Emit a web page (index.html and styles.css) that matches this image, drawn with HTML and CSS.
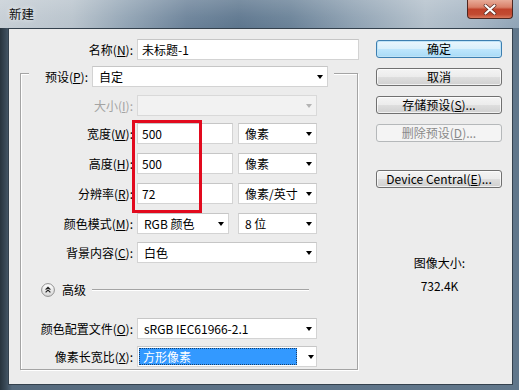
FILE: index.html
```html
<!DOCTYPE html>
<html lang="zh-CN">
<head>
<meta charset="utf-8">
<title>新建</title>
<link rel="stylesheet" href="styles.css">
</head>
<body>
<div class="window">
  <div class="titlebar">
    <span class="title">新建</span>
    <div class="close">
      <svg width="14" height="11" viewBox="0 0 14 11"><path d="M2.5 1.5 L11.5 9.5 M11.5 1.5 L2.5 9.5" stroke="#5a2a22" stroke-width="3.6" stroke-linecap="round"/><path d="M2.5 1.5 L11.5 9.5 M11.5 1.5 L2.5 9.5" stroke="#fff" stroke-width="2.2" stroke-linecap="round"/></svg>
    </div>
  </div>
  <div class="client">
    <div class="left">
      <div class="row name-row">
        <span class="lbl">名称(<u>N</u>):</span>
        <div class="field input w-name">未标题-1</div>
      </div>
      <div class="group">
        <div class="row preset-row">
          <span class="lbl">预设(<u>P</u>):</span>
          <div class="field select w-preset"><span class="val">自定</span><span class="arrow"></span></div>
        </div>
        <div class="row r-size">
          <span class="lbl disabled">大小(<u>I</u>):</span>
          <div class="field select w-full dis"><span class="val"></span><span class="arrow"></span></div>
        </div>
        <div class="row r-width">
          <span class="lbl">宽度(<u>W</u>):</span>
          <div class="field input w-num">500</div>
          <div class="field select w-unit"><span class="val">像素</span><span class="arrow"></span></div>
        </div>
        <div class="row">
          <span class="lbl">高度(<u>H</u>):</span>
          <div class="field input w-num">500</div>
          <div class="field select w-unit"><span class="val">像素</span><span class="arrow"></span></div>
        </div>
        <div class="row">
          <span class="lbl">分辨率(<u>R</u>):</span>
          <div class="field input w-num">72</div>
          <div class="field select w-unit"><span class="val">像素/英寸</span><span class="arrow"></span></div>
        </div>
        <div class="row">
          <span class="lbl">颜色模式(<u>M</u>):</span>
          <div class="field select w-mode"><span class="val">RGB 颜色</span><span class="arrow"></span></div>
          <div class="field select w-bits"><span class="val">8 位</span><span class="arrow"></span></div>
        </div>
        <div class="row r-bg">
          <span class="lbl">背景内容(<u>C</u>):</span>
          <div class="field select w-full"><span class="val">白色</span><span class="arrow"></span></div>
        </div>
        <div class="adv">
          <svg class="adv-icon" width="14" height="14" viewBox="0 0 14 14">
            <defs><linearGradient id="g" x1="0" y1="0" x2="0" y2="1"><stop offset="0" stop-color="#ffffff"/><stop offset="1" stop-color="#d6d6d6"/></linearGradient></defs>
            <circle cx="7" cy="7" r="6.4" fill="url(#g)" stroke="#8e8e8e" stroke-width="1"/>
            <path d="M4.6 6.6 L7 4.3 L9.4 6.6 M4.6 9.4 L7 7.1 L9.4 9.4" fill="none" stroke="#222" stroke-width="1.2"/>
          </svg>
          <span class="adv-text">高级</span>
          <span class="adv-line"></span>
        </div>
        <div class="row r-profile">
          <span class="lbl">颜色配置文件(<u>O</u>):</span>
          <div class="field select w-full"><span class="val">sRGB IEC61966-2.1</span><span class="arrow"></span></div>
        </div>
        <div class="row r-aspect">
          <span class="lbl">像素长宽比(<u>X</u>):</span>
          <div class="field select w-full hl-select"><span class="val hl">方形像素</span><span class="arrow"></span></div>
        </div>
        <div class="redbox"></div>
      </div>
    </div>
    <div class="right">
      <div class="btn default">确定</div>
      <div class="btn">取消</div>
      <div class="btn">存储预设(<u>S</u>)...</div>
      <div class="btn disabled-btn">删除预设(<u>D</u>)...</div>
      <div class="btn btn-dc">Device Central(<u>E</u>)...</div>
      <div class="info">
        <div>图像大小:</div>
        <div>732.4K</div>
      </div>
    </div>
  </div>
</div>
</body>
</html>
```
FILE: styles.css
```css
html, body {
  margin: 0;
  padding: 0;
}
body {
  width: 519px;
  height: 390px;
  overflow: hidden;
  font-family: "Noto Sans CJK SC", "Noto Sans", sans-serif;
  font-size: 12px;
  color: #000;
}
u { text-decoration: underline; text-underline-offset: 1px; }

.window {
  width: 519px;
  height: 390px;
  display: flex;
  flex-direction: column;
  background: linear-gradient(90deg, #27333d 0px, #3b4b59 6px, #55697c 12px, #5d7388 50%, #61778b 100%);
}

.titlebar {
  flex: none;
  height: 28px;
  display: flex;
  justify-content: space-between;
  align-items: flex-start;
  background:
    linear-gradient(180deg, rgba(255,255,255,0.18) 0%, rgba(255,255,255,0.05) 60%, rgba(0,0,0,0) 100%),
    linear-gradient(90deg, #c6ced5 0%, #b8c3cc 14%, #93a5b5 24%, #6b8299 36%, #5d768e 46%, #6a8298 56%, #8ea1b2 68%, #b3c0cb 82%, #a4b4c3 92%, #8fa3b6 100%);
}
.title {
  margin: 6px 0 0 9px;
  line-height: 16px;
  font-size: 12.5px;
  color: #111;
  text-shadow: 0 0 5px rgba(255,255,255,0.9);
}
.close {
  box-sizing: border-box;
  width: 46px;
  height: 19px;
  margin-right: 6px;
  border: 1px solid #4d2620;
  border-top: none;
  border-radius: 0 0 4px 4px;
  background: linear-gradient(180deg, #e8ab98 0%, #d98069 40%, #c0432b 52%, #c24a31 80%, #d9785c 100%);
  display: flex;
  align-items: center;
  justify-content: center;
}

.client {
  flex: 1;
  margin: 0 6px 5px 8px;
  box-sizing: border-box;
  border: 1px solid #34414d;
  background: #ececec;
  display: flex;
}

.left {
  flex: none;
  width: 350px;
}

.row {
  display: flex;
  align-items: center;
  height: 21px;
  margin-top: 9px;
}
.lbl {
  flex: none;
  box-sizing: border-box;
  text-align: right;
  padding-right: 4px;
  line-height: 21px;
  white-space: nowrap;
}
.lbl.disabled { color: #a3a3a3; }

.name-row { margin-top: 10px; }
.name-row .lbl { width: 128px; }
.group .lbl { width: 116px; }

.field {
  box-sizing: border-box;
  height: 21px;
  border: 1px solid #d3d3d3;
  border-top-color: #c6c6c6;
  background: #fff;
  display: flex;
  align-items: center;
  line-height: 19px;
  white-space: nowrap;
  flex: none;
}
.input { padding-left: 4px; }
.select { padding-left: 6px; }
.select .val { flex: 1; }
.arrow {
  flex: none;
  width: 0;
  height: 0;
  border-left: 3.5px solid transparent;
  border-right: 3.5px solid transparent;
  border-top: 4px solid #000;
  margin-right: 4px;
  margin-top: 1px;
}
.dis { background: #f2f2f2; border-color: #d9d9d9; }
.dis .arrow { border-top-color: #b4b4b4; }

.w-name { width: 222px; }
.w-preset { width: 236px; }
.w-full { width: 180px; }
.w-num { width: 96px; }
.w-unit { width: 79px; margin-left: 5px; }
.w-mode { width: 92px; }
.w-bits { width: 79px; margin-left: 9px; }

.group {
  position: relative;
  box-sizing: border-box;
  width: 338px;
  margin: 13px 0 0 11px;
  padding-bottom: 2px;
  border: 1px solid #a4a4a4;
  box-shadow: 1px 1px 0 #fff, inset 1px 1px 0 #fff;
}
.preset-row {
  margin: -8px 0 0 8px;
  width: 305px;
  padding-right: 6px;
  box-sizing: border-box;
  background: #ececec;
}
.preset-row .lbl { width: 63px; }
.r-size { margin-top: 8px; }
.r-width { margin-top: 7px; }
.r-bg { margin-top: 8px; }
.r-profile { margin-top: 21px; }
.r-aspect { margin-top: 7px; }

.adv {
  display: flex;
  align-items: center;
  height: 14px;
  margin-top: 20px;
  padding-left: 20px;
}
.adv-icon { flex: none; }
.adv-text {
  margin-left: 7px;
  line-height: 14px;
}
.adv-line {
  flex: 1;
  margin: 0 48px 0 6px;
  border-top: 1px solid #a4a4a4;
  border-bottom: 1px solid #fff;
}

.hl-select { padding-left: 1px; }
.hl {
  flex: none !important;
  width: 158px;
  height: 17px;
  box-sizing: border-box;
  background: #3399ff;
  color: #fff;
  line-height: 15px;
  padding-left: 3px;
  border: 1px dotted #1a3f6a;
  margin-right: 11px;
}

.redbox {
  position: absolute;
  left: 111px;
  top: 46px;
  width: 70px;
  height: 93px;
  box-sizing: border-box;
  border: 3px solid #e20a1e;
}

.right {
  flex: none;
  width: 126px;
  margin-left: 17px;
  display: flex;
  flex-direction: column;
}
.btn {
  box-sizing: border-box;
  height: 18px;
  margin-top: 10px;
  border: 1px solid #707070;
  border-radius: 3px;
  background: linear-gradient(180deg, #f4f4f4 0%, #ececec 48%, #dedede 52%, #d0d0d0 100%);
  text-align: center;
  line-height: 16px;
  white-space: nowrap;
  box-shadow: inset 0 0 0 1px rgba(255,255,255,0.7);
}
.btn.default {
  margin-top: 11px;
  border-color: #3c7fb1;
  background: linear-gradient(180deg, #eaf6fd 0%, #d9f0fc 48%, #bee6fd 52%, #a9dbf6 100%);
  box-shadow: inset 0 0 0 1px #bfe3f7;
}
.btn.disabled-btn {
  border-color: #b5b8ba;
  background: #f4f4f4;
  color: #8a8a8a;
  box-shadow: none;
}
.btn-dc { margin-top: 28px; }

.info {
  margin-top: 63px;
  text-align: center;
  line-height: 23px;
  padding-left: 1px;
}
```
